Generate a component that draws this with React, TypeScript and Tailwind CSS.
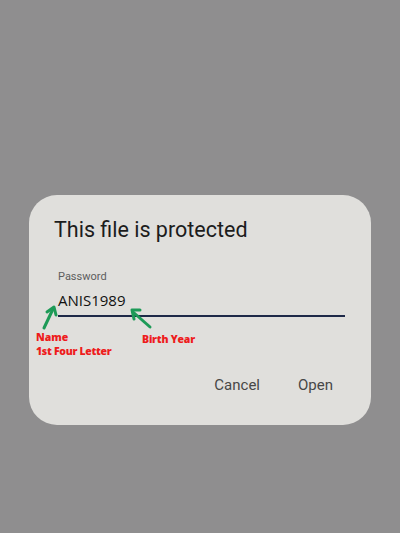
import React from 'react';

const App: React.FC = () => {
  return (
    <div className="w-[400px] h-[533px] bg-[#8f8e8f] overflow-hidden pt-[195px] pl-[29px]" style={{ fontFamily: 'Roboto, "Noto Sans", sans-serif' }}>
      {/* Dialog */}
      <div className="relative w-[342px] h-[230px] rounded-[28px] bg-[#e0dfdc] pl-[25px] pr-[26px] pt-[21px] flex flex-col">
        <h1 className="text-[21.5px] leading-[28px] text-[#1c1c1c] font-normal">This file is protected</h1>

        <div className="mt-[26px] pl-[4px] flex flex-col">
          <span className="text-[11px] leading-[14px] text-[#5d5d5d]">Password</span>
          <span className="mt-[7px] text-[15px] leading-[18px] text-[#111]" style={{ fontFamily: '"Open Sans", sans-serif' }}>ANIS1989</span>
          <div className="mt-[6px] h-[2px] bg-[#1e2948]" />
        </div>

        {/* Annotations */}
        <svg className="absolute left-[8px] top-[105px]" width="140" height="36" viewBox="0 0 140 36">
          <g stroke="#1d9a57" strokeWidth="3" fill="none" strokeLinecap="round" strokeLinejoin="round">
            <line x1="7" y1="28" x2="16" y2="9" />
            <polyline points="10,12 17,7 19,15" />
            <line x1="113" y1="27" x2="96" y2="12" />
            <polyline points="97,19 95,10 103,10" />
          </g>
        </svg>
        <div className="absolute left-[7px] top-[135px] text-[10.5px] leading-[14px] text-[#ee1c1c]" style={{ fontFamily: '"Open Sans", sans-serif', fontWeight: 800 }}>
          <div>Name</div>
          <div className="tracking-[-0.3px]">1st Four Letter</div>
        </div>
        <div className="absolute left-[113px] top-[137px] text-[10.5px] leading-[14px] tracking-[-0.2px] text-[#ee1c1c]" style={{ fontFamily: '"Open Sans", sans-serif', fontWeight: 800 }}>
          Birth Year
        </div>

        <div className="mt-auto mb-[31px] flex justify-end gap-[38px] pr-[12px] text-[15px] leading-[18px] text-[#474747]">
          <span>Cancel</span>
          <span>Open</span>
        </div>
      </div>
    </div>
  );
};

export default App;
